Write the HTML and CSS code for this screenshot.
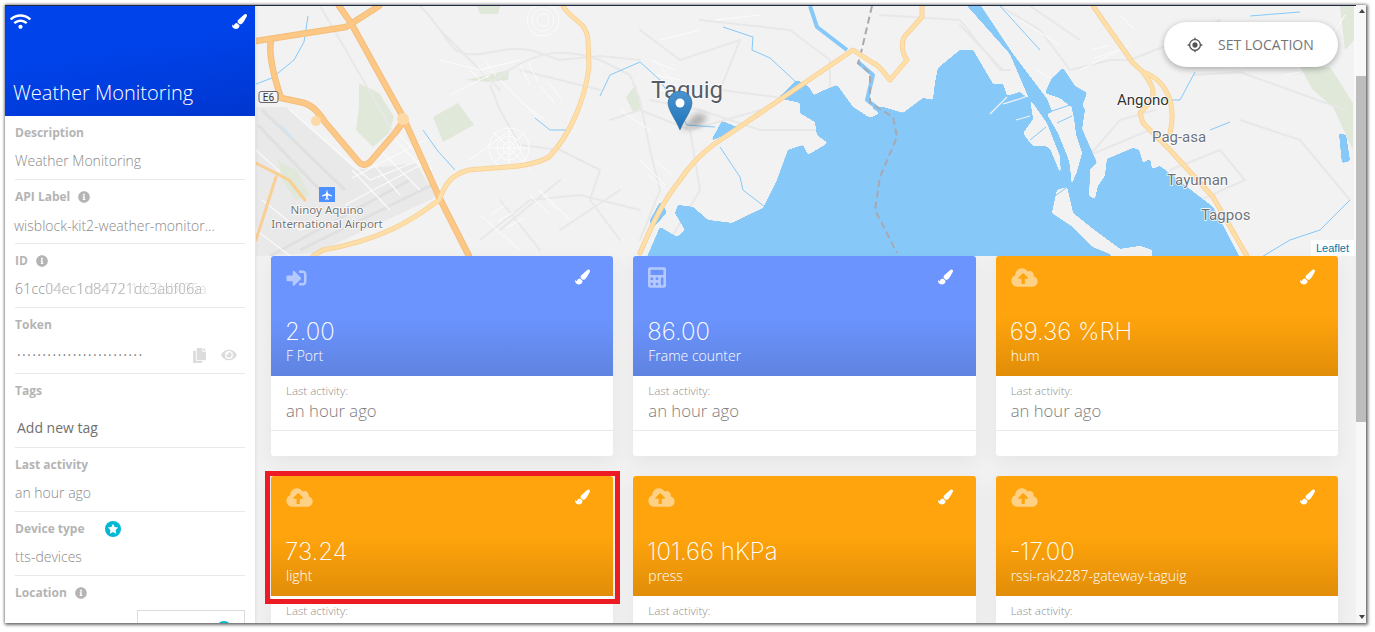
FILE: index.html
```html
<!DOCTYPE html>
<html lang="en">
<head>
<meta charset="utf-8">
<title>Weather Monitoring</title>
<link rel="stylesheet" href="styles.css">
</head>
<body>
<svg class="defs" width="0" height="0" aria-hidden="true">
  <symbol id="i-brush" viewBox="0 0 512 512"><path d="M167.02 309.34c-40.12 2.58-76.53 17.86-97.19 72.3-2.35 6.21-8 9.98-14.59 9.98-11.11 0-45.46-27.67-55.25-34.35C0 439.62 37.93 512 128 512c75.86 0 128-43.77 128-120.19 0-3.11-.65-6.08-.97-9.13l-88.01-73.34zM457.89 0c-15.16 0-29.37 6.71-40.21 16.45C213.27 199.05 192 203.34 192 257.09c0 13.7 3.25 26.76 8.73 38.7l63.82 53.18c7.21 1.8 14.64 3.03 22.39 3.03 62.11 0 98.11-45.47 211.16-256.46 7.38-14.35 13.9-29.85 13.9-45.99C512 20.64 486 0 457.89 0z"/></symbol>
  <symbol id="i-wifi" viewBox="0 0 640 512"><path d="M634.91 154.88C457.74-8.99 182.19-8.93 5.09 154.88c-6.66 6.16-6.79 16.59-.35 22.98l34.24 33.97c6.14 6.1 16.02 6.23 22.4.38 145.92-133.68 371.3-133.71 517.25 0 6.38 5.85 16.26 5.71 22.4-.38l34.24-33.97c6.43-6.39 6.3-16.82-.36-22.98zM320 352c-35.35 0-64 28.65-64 64s28.65 64 64 64 64-28.65 64-64-28.65-64-64-64zm202.67-83.59c-115.26-101.93-290.21-101.82-405.34 0-6.9 6.1-7.12 16.69-.57 23.15l34.44 33.99c6 5.92 15.66 6.32 22.05.8 83.95-72.57 209.74-72.41 293.49 0 6.39 5.52 16.05 5.13 22.05-.8l34.44-33.99c6.56-6.46 6.33-17.06-.56-23.15z"/></symbol>
  <symbol id="i-signin" viewBox="0 0 512 512"><path d="M416 448h-84c-6.6 0-12-5.4-12-12v-40c0-6.6 5.4-12 12-12h84c17.7 0 32-14.3 32-32V160c0-17.7-14.3-32-32-32h-84c-6.6 0-12-5.4-12-12V76c0-6.6 5.4-12 12-12h84c53 0 96 43 96 96v192c0 53-43 96-96 96zm-47-201L201 79c-15-15-41-4.5-41 17v96H24c-13.3 0-24 10.7-24 24v96c0 13.3 10.7 24 24 24h136v96c0 21.5 26 32 41 17l168-168c9.3-9.4 9.3-24.6 0-34z"/></symbol>
  <symbol id="i-calc" viewBox="0 0 448 512"><path fill-rule="evenodd" d="M48 0h352c26 0 48 22 48 48v416c0 26-22 48-48 48H48c-26 0-48-22-48-48V48C0 22 22 0 48 0zM76 64c-7 0-12 5-12 12v104c0 7 5 12 12 12h296c7 0 12-5 12-12V76c0-7-5-12-12-12zM76 256c-7 0-12 5-12 12v40c0 7 5 12 12 12h40c7 0 12-5 12-12v-40c0-7-5-12-12-12zm128 0c-7 0-12 5-12 12v40c0 7 5 12 12 12h40c7 0 12-5 12-12v-40c0-7-5-12-12-12zm128 0c-7 0-12 5-12 12v168c0 7 5 12 12 12h40c7 0 12-5 12-12V268c0-7-5-12-12-12zM76 384c-7 0-12 5-12 12v40c0 7 5 12 12 12h40c7 0 12-5 12-12v-40c0-7-5-12-12-12zm128 0c-7 0-12 5-12 12v40c0 7 5 12 12 12h40c7 0 12-5 12-12v-40c0-7-5-12-12-12z"/></symbol>
  <symbol id="i-cloud" viewBox="0 0 640 512"><path d="M537.6 226.6c4.1-10.7 6.4-22.4 6.4-34.6 0-53-43-96-96-96-19.7 0-38.1 6-53.3 16.2C367 64.2 315.3 32 256 32c-88.4 0-160 71.6-160 160 0 2.7.1 5.4.2 8.1C40.2 219.8 0 273.2 0 336c0 79.5 64.5 144 144 144h368c70.7 0 128-57.3 128-128 0-61.9-44-113.6-102.4-125.4zM393.4 288H328v112c0 8.8-7.2 16-16 16h-48c-8.8 0-16-7.2-16-16V288h-65.4c-14.3 0-21.4-17.2-11.3-27.3l105.4-105.4c6.2-6.2 16.4-6.2 22.6 0l105.4 105.4c10.1 10.1 2.9 27.3-11.3 27.3z"/></symbol>
  <symbol id="i-info" viewBox="0 0 512 512"><path d="M256 8C119.043 8 8 119.083 8 256c0 136.997 111.043 248 248 248s248-111.003 248-248C504 119.083 392.957 8 256 8zm0 110c23.196 0 42 18.804 42 42s-18.804 42-42 42-42-18.804-42-42 18.804-42 42-42zm56 254c0 6.627-5.373 12-12 12h-88c-6.627 0-12-5.373-12-12v-24c0-6.627 5.373-12 12-12h12v-64h-12c-6.627 0-12-5.373-12-12v-24c0-6.627 5.373-12 12-12h64c6.627 0 12 5.373 12 12v100h12c6.627 0 12 5.373 12 12v24z"/></symbol>
  <symbol id="i-copy" viewBox="0 0 448 512"><path d="M320 448v40c0 13.255-10.745 24-24 24H24c-13.255 0-24-10.745-24-24V120c0-13.255 10.745-24 24-24h72v296c0 30.879 25.121 56 56 56h168zm0-344V0H152c-13.255 0-24 10.745-24 24v368c0 13.255 10.745 24 24 24h272c13.255 0 24-10.745 24-24V128H344c-13.2 0-24-10.8-24-24zm120.971-31.029L375.029 7.029A24 24 0 0 0 358.059 0H352v96h96v-6.059a24 24 0 0 0-7.029-16.97z"/></symbol>
  <symbol id="i-eye" viewBox="0 0 576 512"><path d="M572.52 241.4C518.29 135.59 410.93 64 288 64S57.68 135.64 3.48 241.41a32.35 32.35 0 0 0 0 29.19C57.71 376.41 165.07 448 288 448s230.32-71.64 284.52-177.41a32.35 32.35 0 0 0 0-29.19zM288 400a144 144 0 1 1 144-144 143.93 143.93 0 0 1-144 144zm0-240a95.31 95.31 0 0 0-25.31 3.79 47.85 47.85 0 0 1-66.9 66.9A95.78 95.78 0 1 0 288 160z"/></symbol>
  <symbol id="i-target" viewBox="0 0 24 24"><path d="M12 8c-2.21 0-4 1.79-4 4s1.79 4 4 4 4-1.79 4-4-1.79-4-4-4zm8.94 3c-.46-4.17-3.77-7.48-7.94-7.94V1h-2v2.06C6.83 3.52 3.52 6.83 3.06 11H1v2h2.06c.46 4.17 3.77 7.48 7.94 7.94V23h2v-2.06c4.17-.46 7.48-3.77 7.94-7.94H23v-2h-2.06zM12 19c-3.87 0-7-3.13-7-7s3.13-7 7-7 7 3.13 7 7-3.13 7-7 7z"/></symbol>
</svg>

<div class="window">
  <aside class="sidebar">
    <header class="side-head">
      <div class="side-icons">
        <svg class="ic-wifi"><use href="#i-wifi"/></svg>
        <svg class="ic-brush"><use href="#i-brush"/></svg>
      </div>
      <h1 class="side-title">Weather Monitoring</h1>
    </header>
    <div class="side-body">
      <section class="row">
        <div class="label">Description</div>
        <div class="value">Weather Monitoring</div>
      </section>
      <section class="row">
        <div class="label">API Label <svg class="ic-info"><use href="#i-info"/></svg></div>
        <div class="value value-tight">wisblock-kit2-weather-monitor...</div>
      </section>
      <section class="row">
        <div class="label">ID <svg class="ic-info"><use href="#i-info"/></svg></div>
        <div class="value value-id">61cc<span class="scramble">04ec1d84721dc3abf06a<span class="scramble-over">04ec1d3472 1dc3abf06a</span></span></div>
      </section>
      <section class="row row-token">
        <div class="label">Token</div>
        <div class="value token">
          <span class="dots">•••••••••••••••••••••••••</span>
          <svg class="ic-copy"><use href="#i-copy"/></svg>
          <svg class="ic-eye"><use href="#i-eye"/></svg>
        </div>
      </section>
      <section class="row row-tags">
        <div class="label">Tags</div>
        <div class="tag-input">Add new tag</div>
      </section>
      <section class="row">
        <div class="label">Last activity</div>
        <div class="value">an hour ago</div>
      </section>
      <section class="row">
        <div class="label">Device type <span class="star-badge"><svg viewBox="0 0 16 16"><path d="M8 2.8l1.6 3.3 3.6.5-2.6 2.5.6 3.6L8 11l-3.200 1.700.6-3.600L2.800 6.600l3.600-.5z"/></svg></span></div>
        <div class="value">tts-devices</div>
      </section>
      <section class="row row-last">
        <div class="label">Location <svg class="ic-info"><use href="#i-info"/></svg></div>
        <div class="loc-box"><span class="loc-dot"></span></div>
      </section>
    </div>
  </aside>

  <main class="main">
    <div class="map">
      <svg class="map-svg" viewBox="256 6 1098 250" width="1098" height="250" aria-label="Map">
        <defs>
          <filter id="smooth" filterUnits="userSpaceOnUse" x="240" y="-20" width="1130" height="300" color-interpolation-filters="sRGB">
            <feGaussianBlur stdDeviation="1.300"/>
            <feColorMatrix type="matrix" values="1 0 0 0 0  0 1 0 0 0  0 0 1 0 0  0 0 0 14 -6"/>
          </filter>
          <linearGradient id="mk" x1="0" y1="0" x2="0" y2="1"><stop offset="0" stop-color="#4a93cf"/><stop offset="1" stop-color="#2073b8"/></linearGradient>
        </defs>
        <rect x="256" y="6" width="1098" height="250" fill="#f2f2f2"/>
        <!-- airport -->
        <polygon points="256,107 286,107 356,170 416,163 436,197 316,253 256,256" fill="#e9e9e9"/>
        <g stroke="#e0e0e0" stroke-width="3" fill="none">
          <path d="M262 110L345 190M258 125L320 190M300 250L432 185M270 256L410 180"/>
        </g>
        <path d="M280 125L292 138" stroke="#d6e4ee" stroke-width="3"/>
        <g stroke="#fafafa" stroke-width="1.200" fill="none">
          <path d="M290 110L370 180L420 160M352 170L390 210M370 160L400 195M380 150L420 190M256 150L300 190M262 200L300 230L340 220M256 230L290 256M345 205L430 160M395 140L420 165M400 135L432 170M352 178L425 140"/>
        </g>
        <!-- parks -->
        <g fill="#dfe8d9">
          <polygon points="359,83 379,93 394,117 389,133 373,147 356,130 359,107"/>
          <polygon points="433,117 458,103 474,125 443,142"/>
          <polygon points="466,80 509,70 508,80 489,82"/>
          <polygon points="626,97 636,85 641,110 633,112"/>
          <polygon points="278,160 296,170 310,195 296,200 282,180"/>
          <polygon points="1300,67 1330,67 1353,103 1353,150 1333,107 1313,90"/>
          <polygon points="1340,6 1354,6 1354,40 1345,50"/>
          <polygon points="477,6 500,6 498,14 480,14"/>
        </g>
        <!-- minor roads -->
        <g stroke="#e8e8e8" stroke-width="2" fill="none" stroke-linejoin="round" stroke-linecap="round">
          <path d="M320 6L340 40L392 130M420 6C440 25 450 50 460 52C480 60 500 45 530 50L560 60L600 56L640 60M440 30L470 60L500 90M495 80C540 45 570 50 600 60L630 75L640 100L650 150L660 190L640 240"/>
          <path d="M490 85L500 110L520 145L560 150M560 150L600 170L590 200L620 240M480 240L530 200L580 195L640 210M500 200L540 250M610 120L640 110L690 130L760 110M690 130L700 190L670 240"/>
          <path d="M700 20L790 30L830 60L830 90M640 30L680 60L740 40L720 90L800 100M650 100L700 110L760 130L820 130M880 15L960 20L1000 70L1010 70M960 25L1003 70"/>
          <path d="M1000 6L1040 30L1070 70L1110 60L1130 60L1180 40L1220 20M1030 6L1080 40M1195 75L1240 72L1290 90L1345 110M1150 130L1090 155M1090 155L1120 120L1155 110M1170 170L1220 150L1245 180L1200 200M1240 120L1300 140L1350 200"/>
          <path d="M520 70L560 80L600 90M560 230L620 190M500 230L560 180"/>
        </g>
        <g stroke="#fcfcfc" stroke-width="1" fill="none">
          <circle cx="543" cy="20" r="6"/><circle cx="543" cy="20" r="11"/><circle cx="543" cy="20" r="16"/>
          <circle cx="509" cy="148" r="6"/><circle cx="509" cy="148" r="12"/><circle cx="509" cy="148" r="20"/>
          <path d="M490 148L530 148M509 128L509 168M493 132L525 164M525 132L493 164"/>
          <path d="M440 60L480 70L520 60M500 80L540 120M450 95L490 75M470 160L510 130L530 170M540 190L570 220M480 215L520 250M620 110L650 130M640 160L665 185M655 60L680 90M660 40L700 30M715 20L760 15M1020 20L1060 45M1080 70L1130 45M1240 45L1300 35M1330 40L1345 15"/>
          <path d="M470 70L480 80M478 66L488 78M486 62L496 76M520 65L530 85M528 62L538 82M540 85L556 105M548 82L562 100M525 105L545 120M530 195L550 215M538 190L558 210M490 215L505 205M498 222L514 212M506 228L524 218M650 60L675 70M655 75L680 80M660 90L684 92M655 160L672 175M648 175L665 188"/>
          <path d="M1037 70L1050 78M1090 50L1110 45M1095 58L1118 50M1120 15L1135 30M1285 75L1300 72"/>
        </g>
        <!-- streams -->
        <g stroke="#86c9f9" stroke-width="1" fill="none">
          <path d="M256 84L272 78L294 60L304 42L308 16M423 130L437 150L455 170M535 118L550 130L570 130M600 96L610 75L640 62L660 80L687 125L715 127M723 27L753 37L752 50L770 58L797 83L817 103M720 147L740 177L743 190L765 207M1300 12L1250 16M1160 100L1180 100L1195 72M1260 258L1290 240L1320 230L1350 200M1000 6L1040 50M1230 122L1210 130"/>
        </g>
        <!-- water -->
        <g fill="#86c9f9" filter="url(#smooth)">
          <path d="M644 264L660 227L677 237L685 230L675 213L678 205L693 207L708 220L732 223L763 208L777 180L788 150L803 145L808 155L828 143L817 135L815 122L800 113L800 103L820 92L837 85L853 107L870 118L880 113L870 107L883 107L903 113L923 98L933 100L935 83L938 68L960 50L973 50L993 84L1003 84L1007 96L1020 92L1030 100L1033 119L1023 133L1027 139L1033 146L1045 146L1050 149L1060 173L1066 180L1089 196L1095 199L1098 186L1105 176L1107 159L1133 148L1139 150L1143 163L1150 159L1152 169L1160 166L1187 187L1213 207L1227 233L1243 264Z"/>
          <path d="M962 0L977 0L1013 54L1047 99L1063 139L1070 166L1072 195L1062 190L1060 156L1047 123L1028 96L1010 54Z"/>
          <path d="M1063 68L1052 78L1045 93L1060 98L1070 106L1073 119L1075 135L1081 153L1075 176L1070 190L1089 196L1090 169L1097 163L1082 129L1085 109L1082 106L1087 93L1075 86Z"/>
          <path d="M722 121L711 141L739 128Z"/>
          <path d="M778 98L797 80L809 87L820 107Z"/>
          <path d="M649 222L660 202L667 212L655 226Z"/>
          <path d="M1339 133L1342 163L1350 161L1346 135Z"/>
        </g>
        <!-- land over water -->
        <g fill="#f2f2f2" filter="url(#smooth)">
          <path d="M1057 190L1052 213L1073 227L1093 247L1110 254L1115 264L1152 264L1152 250L1140 246L1120 249L1093 229L1073 213L1067 187Z"/>
          <path d="M1047 114L1071 105L1074 119L1076 135L1082 153L1075 178L1071 165L1058 133Z"/>
        </g>
        <path d="M1007 97L990 114M1003 104C1010 102 1018 100 1027 96M1016 120L1030 116" stroke="#f2f2f2" stroke-width="1.200" fill="none"/>
        <path d="M1030 140L1046 127M1049 112L1070 105M1057 123L1072 116M1055 196L1066 188" stroke="#86c9f9" stroke-width="1" fill="none"/>
        <path d="M810 6L817 27L847 50M858 62L873 75L867 100L880 110" fill="none" stroke="#86c9f9" stroke-width="4" stroke-linejoin="round"/>
        <!-- border -->
        <path d="M872 6L860 57L858 63L870 73L870 103L893 117L897 137L880 177L875 210L897 253" fill="none" stroke="#a8a8b0" stroke-width="2" stroke-dasharray="7 4"/>
        <!-- highways -->
        <g fill="none" stroke-linejoin="round" stroke-linecap="round">
          <g stroke="#f3bd7a" stroke-width="6.500">
            <path d="M339 6L351 23L403 117L439 197L469 256"/>
            <path d="M256 41L346 27L379 6"/>
            <path d="M271 40C268 55 275 80 281 98L300 102C312 104 318 112 325 122L357 160C362 166 365 166 370 162L395 133C399 128 400 125 403 123"/>
          </g>
          <g stroke="#fdc785" stroke-width="4.500">
            <path d="M339 6L351 23L403 117L439 197L469 256"/>
            <path d="M256 41L346 27L379 6"/>
            <path d="M271 40C268 55 275 80 281 98L300 102C312 104 318 112 325 122L357 160C362 166 365 166 370 162L395 133C399 128 400 125 403 123"/>
          </g>
          <path d="M256 163L289 180L305 200M276 177L256 240" stroke="#f9cf95" stroke-width="3"/>
          <circle cx="316" cy="121" r="5" fill="#fcd9a6" stroke="none"/>
          <circle cx="403" cy="119" r="6" fill="#fcd9a6" stroke="none"/>
          <g stroke="#f7cf98" stroke-width="5">
            <path d="M563 6C570 20 586 20 588 40L589 67C585 100 570 135 549 157C530 168 500 167 469 170C450 175 445 185 439 200C410 222 380 240 323 250L313 256"/>
            <path d="M640 253C650 230 660 205 680 180C690 165 700 155 713 145L853 50L873 63C880 65 885 75 890 80L907 60C900 50 902 40 905 36L922 17L922 6"/>
            <path d="M1093 6L1133 63L1143 72C1155 76 1165 85 1170 100C1174 115 1172 125 1170 133M1143 72C1152 85 1155 90 1152 100L1140 113L1143 123L1170 150L1213 197L1247 256"/>
          </g>
          <g stroke="#fedfa8" stroke-width="3.500">
            <path d="M563 6C570 20 586 20 588 40L589 67C585 100 570 135 549 157C530 168 500 167 469 170C450 175 445 185 439 200C410 222 380 240 323 250L313 256"/>
            <path d="M640 253C650 230 660 205 680 180C690 165 700 155 713 145L853 50L873 63C880 65 885 75 890 80L907 60C900 50 902 40 905 36L922 17L922 6"/>
            <path d="M1093 6L1133 63L1143 72C1155 76 1165 85 1170 100C1174 115 1172 125 1170 133M1143 72C1152 85 1155 90 1152 100L1140 113L1143 123L1170 150L1213 197L1247 256"/>
          </g>
        </g>
        <path d="M1040 6" stroke="none"/>
        <!-- shield -->
        <rect x="259" y="91.500" width="19" height="11" rx="2" fill="#f4f4f4" stroke="#666"/>
        <text class="t-shield" x="268.500" y="101">E6</text>
        <!-- airport pin -->
        <rect x="319" y="187" width="16" height="15" fill="#4d90fe"/>
        <path d="M327 189.500l1 4 4 2v1l-4-1-.4 2.500 1.400 1v.8l-2-.5-2 .5v-.8l1.400-1-.4-2.500-4 1v-1l4-2z" fill="#fff"/>
        <!-- labels -->
        <g class="labels">
          <text class="t-city" x="651" y="98">Taguig</text>
          <text class="t-town dark" x="1117" y="105">Angono</text>
          <text class="t-town" x="1152" y="142">Pag-asa</text>
          <text class="t-town" x="1167" y="185">Tayuman</text>
          <text class="t-town" x="1201" y="220">Tagpos</text>
          <text class="t-air" x="327" y="214">Ninoy Aquino</text>
          <text class="t-air" x="327" y="228">International Airport</text>
        </g>
        <!-- marker -->
        <path d="M680 130L697 113L708 116L700 126Z" fill="#000" opacity=".28" class="marker-shadow"/>
        <path d="M680 130C676 120 668 110 668 103A12 12 0 0 1 692 103C692 110 684 120 680 130Z" fill="url(#mk)" stroke="#2e6c97" stroke-width=".6"/>
        <circle cx="680" cy="103" r="4.500" fill="#fff"/>
      </svg>
      <button class="set-location" type="button"><svg class="ic-target"><use href="#i-target"/></svg>SET LOCATION</button>
      <div class="attribution">Leaflet</div>
    </div>

    <div class="cards">
      <article class="card">
        <div class="card-head blue">
          <div class="card-icons"><svg class="ic-signin"><use href="#i-signin"/></svg><svg class="ic-card-brush"><use href="#i-brush"/></svg></div>
          <div class="card-value">2.00</div>
          <div class="card-name">F Port</div>
        </div>
        <div class="card-foot"><div class="foot-label">Last activity:</div><div class="foot-value">an hour ago</div></div>
      </article>
      <article class="card">
        <div class="card-head blue">
          <div class="card-icons"><svg class="ic-calc"><use href="#i-calc"/></svg><svg class="ic-card-brush"><use href="#i-brush"/></svg></div>
          <div class="card-value">86.00</div>
          <div class="card-name">Frame counter</div>
        </div>
        <div class="card-foot"><div class="foot-label">Last activity:</div><div class="foot-value">an hour ago</div></div>
      </article>
      <article class="card">
        <div class="card-head orange">
          <div class="card-icons"><svg class="ic-cloud"><use href="#i-cloud"/></svg><svg class="ic-card-brush"><use href="#i-brush"/></svg></div>
          <div class="card-value">69.36 %RH</div>
          <div class="card-name">hum</div>
        </div>
        <div class="card-foot"><div class="foot-label">Last activity:</div><div class="foot-value">an hour ago</div></div>
      </article>
      <article class="card highlighted">
        <div class="card-head orange">
          <div class="card-icons"><svg class="ic-cloud"><use href="#i-cloud"/></svg><svg class="ic-card-brush"><use href="#i-brush"/></svg></div>
          <div class="card-value">73.24</div>
          <div class="card-name">light</div>
        </div>
        <div class="card-foot"><div class="foot-label">Last activity:</div><div class="foot-value">an hour ago</div></div>
        <div class="red-box"></div>
      </article>
      <article class="card">
        <div class="card-head orange">
          <div class="card-icons"><svg class="ic-cloud"><use href="#i-cloud"/></svg><svg class="ic-card-brush"><use href="#i-brush"/></svg></div>
          <div class="card-value">101.66 hKPa</div>
          <div class="card-name">press</div>
        </div>
        <div class="card-foot"><div class="foot-label">Last activity:</div><div class="foot-value">an hour ago</div></div>
      </article>
      <article class="card">
        <div class="card-head orange">
          <div class="card-icons"><svg class="ic-cloud"><use href="#i-cloud"/></svg><svg class="ic-card-brush"><use href="#i-brush"/></svg></div>
          <div class="card-value">-17.00</div>
          <div class="card-name">rssi-rak2287-gateway-taguig</div>
        </div>
        <div class="card-foot"><div class="foot-label">Last activity:</div><div class="foot-value">an hour ago</div></div>
      </article>
    </div>
  </main>

  <div class="scrollbar">
    <span class="arrow-up"></span>
    <div class="track"><div class="thumb"></div></div>
    <span class="arrow-down"></span>
  </div>
</div>
</body>
</html>
```

FILE: styles.css
```css
html, body { margin: 0; padding: 0; height: 100%; overflow: hidden; background: #fff; }
body { padding: 5px 9px 9px 5px; box-sizing: border-box; font-family: "Open Sans", "Liberation Sans", sans-serif; }
.defs { position: absolute; }
svg { display: block; fill: currentColor; }

.window {
  display: flex;
  height: 618px;
  width: 1361px;
  background: #f1f1f1;
  overflow: hidden;
  box-shadow: 1px 1px 3px 1px rgba(0,0,0,.55), -1px 0 3px rgba(0,0,0,.12), 0 -1px 3px rgba(0,0,0,.12);
}

/* Sidebar */
.sidebar { width: 250px; flex: none; background: #fff; border-top: 1px solid #1f2a44; position: relative; z-index: 2; box-shadow: 1px 0 3px rgba(0,0,0,.08); }
.side-head { height: 110px; box-sizing: border-box; padding: 8px 8px 0; color: #fff; background: linear-gradient(170deg, #0043ea 40%, #0036cf 100%); display: flex; flex-direction: column; justify-content: space-between; }
.side-icons { display: flex; justify-content: space-between; align-items: flex-start; }
.ic-wifi { width: 21px; height: 17px; margin-top: -1px; margin-left: -3px; }
.ic-brush { width: 15px; height: 15px; margin-top: 0; }
.side-title { margin: 0 0 10px; font-size: 20px; font-weight: 300; line-height: 26px; }
.side-body { padding: 0 10px; }
.row { height: 64px; box-sizing: border-box; border-bottom: 1px solid #e9e9e9; padding-top: 9px; }
.row-token { height: 66px; }
.row-tags { height: 74px; }
.row-last { border-bottom: 0; position: relative; }
.label { display: flex; align-items: center; font-size: 12px; line-height: 16px; font-weight: 700; color: #b4b4b4; }
.ic-info { width: 12px; height: 12px; margin-left: 8px; color: #b4b4b4; }
.value { margin-top: 10px; font-size: 14px; line-height: 20px; font-weight: 300; color: #8a8a8a; white-space: nowrap; }
.value-tight { margin: 11px 0 0 -1px; }
.value-id { letter-spacing: .2px; }
.scramble { position: relative; color: #a8a8a8; filter: blur(.4px); }
.scramble-over { position: absolute; left: 1px; top: 0; white-space: nowrap; color: #cfcfcf; opacity: .7; }
.token { display: flex; align-items: center; margin-top: 12px; }
.dots { font-size: 10px; color: #7c7c7c; letter-spacing: 1.300px; margin-left: 2px; width: 176px; white-space: nowrap; overflow: hidden; }
.ic-copy { width: 13px; height: 15px; color: #dcdcdc; }
.ic-eye { width: 16px; height: 14px; color: #dcdcdc; margin-left: 15px; }
.tag-input { margin: 19px 0 0 2px; font-size: 14px; line-height: 20px; color: #707070; }
.star-badge { width: 16px; height: 16px; border-radius: 50%; background: #00b8d4; margin-left: 20px; color: #fff; display: block; }
.star-badge svg { width: 16px; height: 16px; }
.loc-box { position: absolute; left: 122px; right: 0; top: 34px; height: 60px; background: #fff; border: 1px solid #dcdcdc; }
.loc-dot { position: absolute; right: 12px; top: 10px; width: 16px; height: 16px; border-radius: 50%; background: #00b8d4; }

/* Main */
.main { flex: 1; min-width: 0; border-top: 1px solid #1f2a44; overflow: hidden; background: #f1f1f1; }
.map { position: relative; width: 1098px; margin-left: 1px; height: 250px; overflow: hidden; background: #f2f2f2; border-right: 2px solid #f9f9f9; }
.map-svg { display: block; }
.map-svg text { font-family: "Roboto", "Liberation Sans", sans-serif; }
.labels text { paint-order: stroke; stroke: #fff; stroke-width: 1.500px; stroke-linejoin: round; }
.t-city { font-size: 24px; fill: #555d69; }
.t-town { font-size: 15px; fill: #6d727b; }
.t-town.dark { fill: #333; }
.map-svg .t-air { font-family: "Noto Sans", sans-serif; font-size: 11.500px; fill: #737373; text-anchor: middle; }
.t-shield { font-size: 10px; text-anchor: middle; fill: #333; }
.marker-shadow { filter: blur(3px); }
.set-location { position: absolute; left: 908px; top: 16px; width: 174px; height: 45px; border: 0; border-radius: 23px; background: #fff; box-shadow: 0 2px 6px rgba(0,0,0,.3); display: flex; align-items: center; padding: 0 0 0 23px; font: 400 14px "Open Sans", sans-serif; color: #757575; }
.ic-target { width: 16px; height: 16px; color: #555; margin-right: 15px; }
.attribution { position: absolute; right: 0; bottom: 0; padding: 0 5px; height: 16px; font: 11px/16px "Liberation Sans", sans-serif; color: #0078a8; background: rgba(255,255,255,.85); }

.cards { display: grid; grid-template-columns: repeat(3, 1fr); gap: 20px; padding: 0 18px 0 16px; }
.card { position: relative; height: 200px; background: #fff; border-radius: 3px; box-shadow: 0 6px 20px rgba(0,0,0,.05); }
.card-head { height: 120px; box-sizing: border-box; padding: 12px 23px 0 15px; color: #fff; border-radius: 3px 3px 0 0; }
.card-head.blue { background: linear-gradient(#6b94ff 50%, #5f83e1 100%); }
.card-head.orange { background: linear-gradient(#ffa40c 50%, #e18d08 100%); }
.card-icons { display: flex; justify-content: space-between; align-items: flex-start; height: 21px; }
.ic-signin { width: 21px; height: 20px; opacity: .5; }
.ic-calc { width: 18px; height: 21px; opacity: .5; margin-top: -1px; }
.ic-cloud { width: 27px; height: 21px; opacity: .5; margin-top: -1px; }
.ic-card-brush { width: 15px; height: 16px; margin-top: 1px; }
.card-value { margin: 27px 0 0 -1px; font: 200 24px/32px "Inter", sans-serif; }
.card-name { font-size: 14px; line-height: 18px; font-weight: 300; margin-top: -1px; }
.card-foot { padding: 7px 15px 0; height: 55px; box-sizing: border-box; border-bottom: 1px solid #eaeaea; }
.foot-label { font-size: 11.500px; line-height: 15px; font-weight: 300; color: #8f8f8f; }
.foot-value { font-size: 16.700px; line-height: 24px; font-weight: 300; color: #7c7c7c; margin-top: 1px; }
.red-box { position: absolute; left: -6px; right: -7px; top: -5px; height: 123px; border: 5px solid #ed1c24; pointer-events: none; }

/* Scrollbar */
.scrollbar { width: 10px; flex: none; background: #f8f8f8; display: flex; flex-direction: column; align-items: center; }
.arrow-up, .arrow-down { width: 0; height: 0; border-left: 3.500px solid transparent; border-right: 3.500px solid transparent; margin: 0 0 0 1px; }
.arrow-up { border-bottom: 4px solid #444; margin-top: 4px; }
.arrow-down { border-top: 4px solid #444; margin-bottom: 4px; }
.track { flex: 1; width: 100%; padding-top: 63px; }
.thumb { height: 346px; background: #bdbdbd; }
```
